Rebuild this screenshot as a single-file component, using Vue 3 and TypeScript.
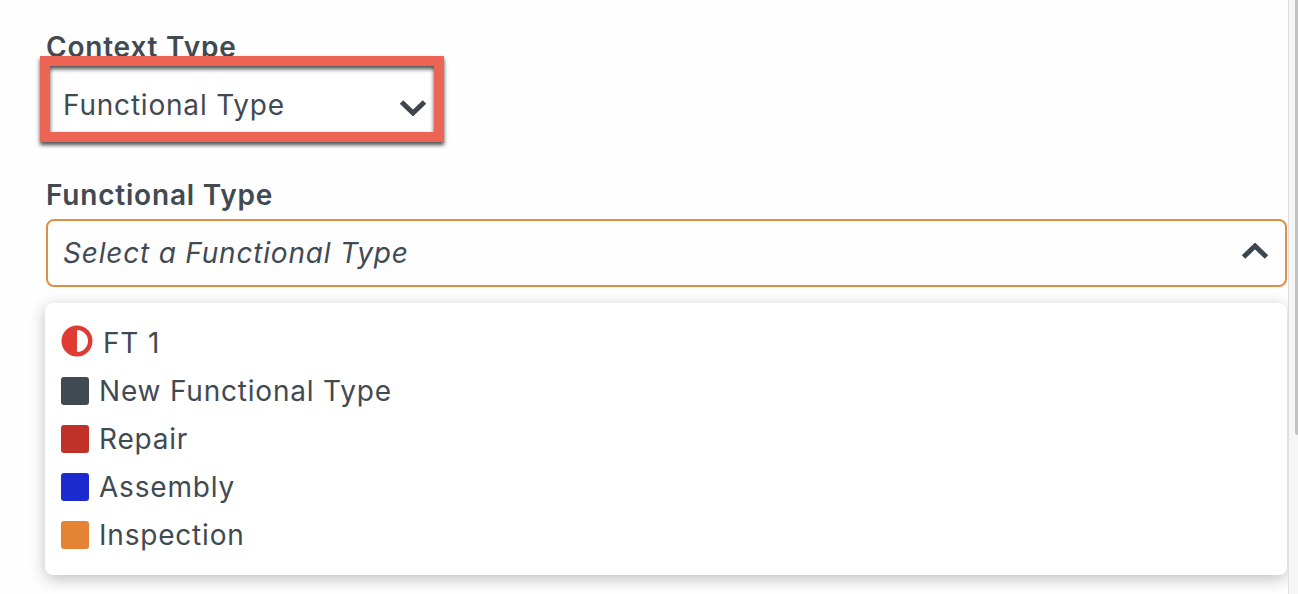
<script setup lang="ts">
interface FunctionalType {
  name: string
  color: string
}

const types: FunctionalType[] = [
  { name: 'New Functional Type', color: '#414a52' },
  { name: 'Repair', color: '#c03228' },
  { name: 'Assembly', color: '#1c2bd0' },
  { name: 'Inspection', color: '#e58335' },
]
</script>

<template>
  <div class="page">
    <main class="form">
      <label class="label label--context">Context Type</label>
      <div class="select select--context">
        <span>Functional Type</span>
        <svg class="chevron" width="28" height="17" viewBox="0 0 28 17" fill="none" aria-hidden="true">
          <path d="M2.500 3L14 14 25.500 3" stroke="currentColor" stroke-width="5" />
        </svg>
        <div class="highlight"></div>
      </div>

      <label class="label label--functional">Functional Type</label>
      <div class="select select--open">
        <em>Select a Functional Type</em>
        <svg class="chevron chevron--up" width="28" height="17" viewBox="0 0 28 17" fill="none" aria-hidden="true">
          <path d="M2.500 14L14 3l11.500 11" stroke="currentColor" stroke-width="5" />
        </svg>
      </div>

      <ul class="menu">
        <li class="menu__item">
          <svg class="half-circle" width="32" height="32" viewBox="0 0 32 32" aria-hidden="true">
            <circle cx="16" cy="16" r="15.500" fill="#de3c33" />
            <path d="M16 5a11 11 0 0 1 0 22z" fill="#fff" />
          </svg>
          <span>FT 1</span>
        </li>
        <li v-for="type in types" :key="type.name" class="menu__item">
          <span class="swatch" :style="{ background: type.color }"></span>
          <span>{{ type.name }}</span>
        </li>
      </ul>
    </main>

    <aside class="scrollbar">
      <div class="scrollbar__thumb"></div>
    </aside>
  </div>
</template>

<style>
html,
body {
  margin: 0;
  overflow: hidden;
  background: #fefefe;
}
</style>

<style scoped>
.page {
  display: flex;
  height: 594px;
  overflow: hidden;
  color: #414a52;
  font-family: Inter, 'Liberation Sans', sans-serif;
  font-size: 28px;
  letter-spacing: 0.8px;
  line-height: 36px;
}

.form {
  flex: 1;
  min-width: 0;
  padding: 29px 1px 0 46px;
  box-sizing: border-box;
}

.label {
  display: block;
  font-weight: 600;
}

.label--context {
  height: 43px;
}

.label--functional {
  margin-top: 37px;
  height: 42px;
}

.select {
  position: relative;
  display: flex;
  align-items: center;
  justify-content: space-between;
  box-sizing: border-box;
  height: 68px;
  padding: 0 16px;
  border-radius: 8px;
}

.select--context {
  width: 392px;
  padding: 0 11px 2px 17px;
  background: #fff;
}

.select--context .chevron {
  margin-top: 5px;
}

.select--open {
  padding-left: 15px;
  border: 2px solid #e08e45;
}

.select--open em {
  font-style: italic;
}

.chevron {
  flex: none;
  color: #3d464d;
}

.chevron--up {
  margin-top: -4px;
}

.highlight {
  position: absolute;
  top: -16px;
  left: -6px;
  box-sizing: border-box;
  width: 404px;
  height: 86px;
  border: 10px solid #ec6454;
  box-shadow:
    0 3px 4px rgba(30, 30, 30, 0.8),
    inset 0 3px 4px rgba(30, 30, 30, 0.8);
  pointer-events: none;
}

.menu {
  margin: 16px 0 0 -1px;
  padding: 16px;
  list-style: none;
  background: #fff;
  border-radius: 8px;
  box-shadow: 0 4px 16px rgba(0, 0, 0, 0.25);
}

.menu__item {
  display: flex;
  align-items: center;
  gap: 10px;
  height: 48px;
}

.half-circle {
  flex: none;
  margin-top: -4px;
}

.swatch {
  flex: none;
  width: 28px;
  height: 28px;
  border-radius: 3px;
}

.scrollbar {
  position: relative;
  flex: none;
  width: 10px;
  background: #f6f6f6;
  border-left: 1px solid #dedede;
  box-sizing: border-box;
}

.scrollbar__thumb {
  position: absolute;
  top: 0;
  right: 0;
  width: 3px;
  height: 435px;
  background: #c3c3c3;
  border-radius: 0 0 0 3px;
}
</style>
